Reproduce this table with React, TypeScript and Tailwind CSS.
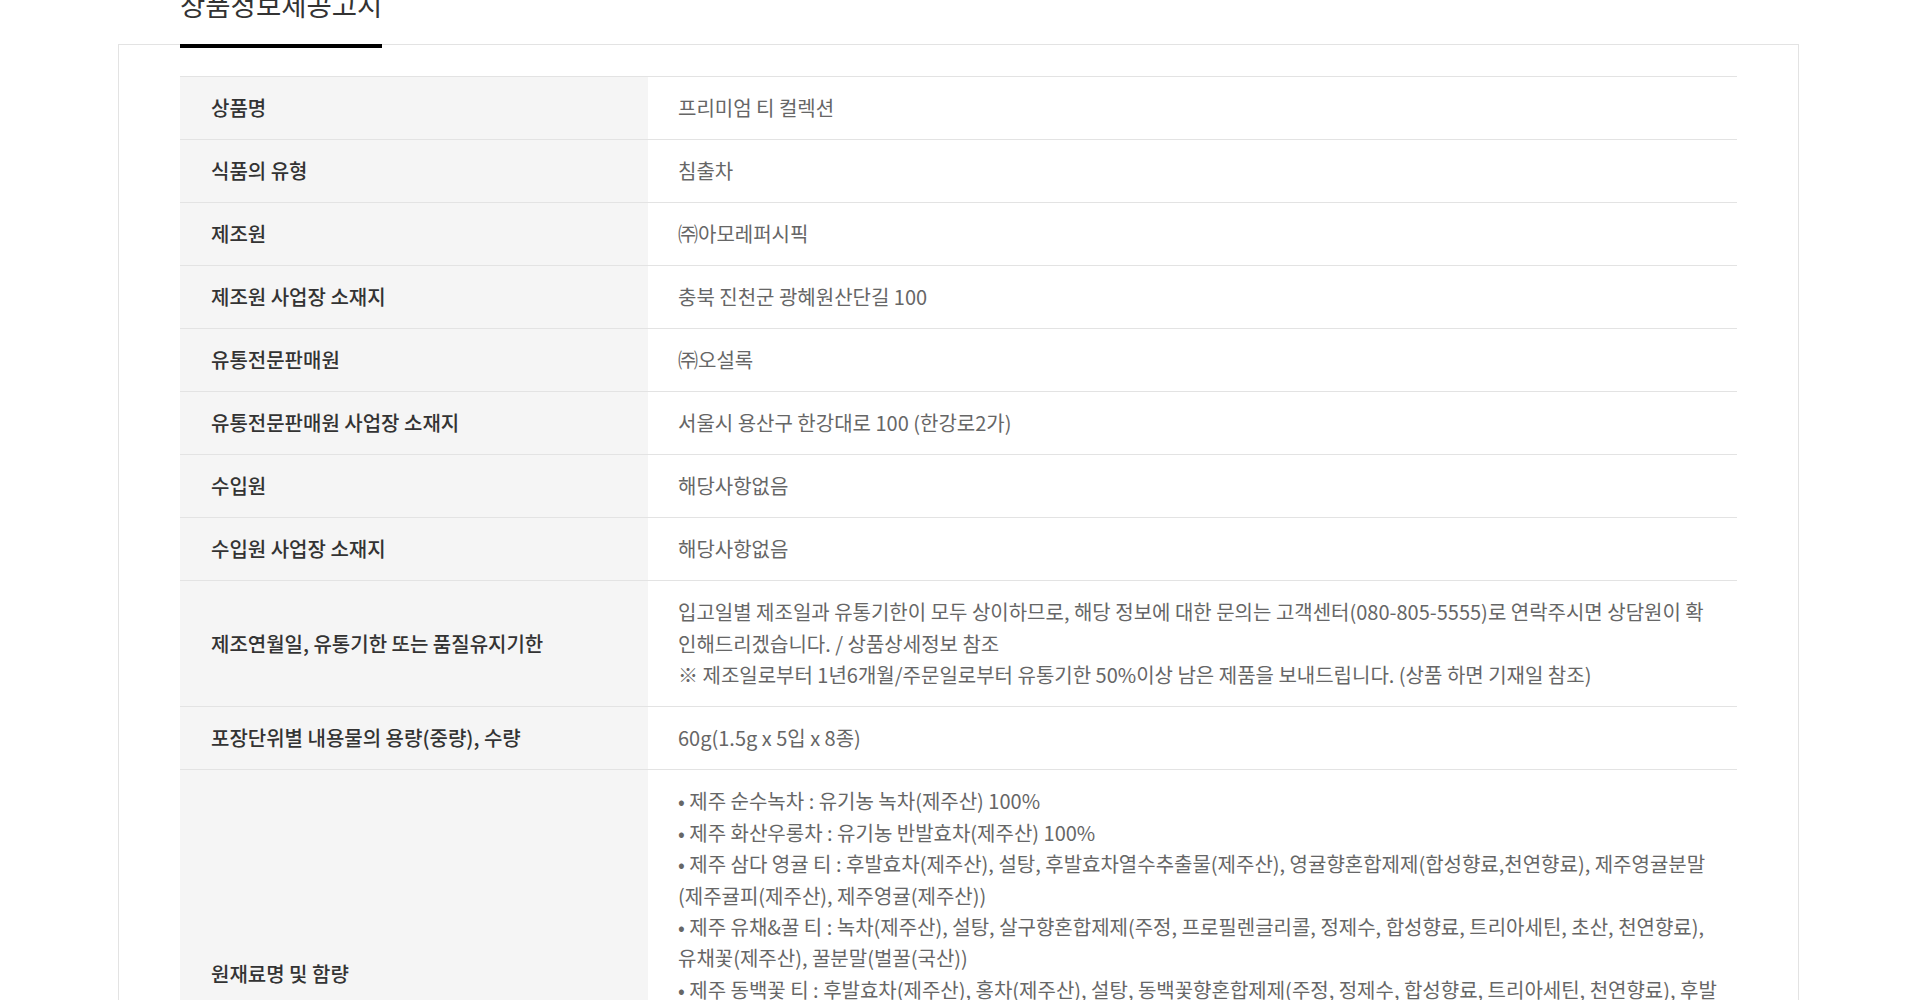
import React from 'react';

interface InfoRow {
    label: string;
    lines: string[];
}

const rows: InfoRow[] = [
    { label: '상품명', lines: ['프리미엄 티 컬렉션'] },
    { label: '식품의 유형', lines: ['침출차'] },
    { label: '제조원', lines: ['㈜아모레퍼시픽'] },
    { label: '제조원 사업장 소재지', lines: ['충북 진천군 광혜원산단길 100'] },
    { label: '유통전문판매원', lines: ['㈜오설록'] },
    { label: '유통전문판매원 사업장 소재지', lines: ['서울시 용산구 한강대로 100 (한강로2가)'] },
    { label: '수입원', lines: ['해당사항없음'] },
    { label: '수입원 사업장 소재지', lines: ['해당사항없음'] },
    {
        label: '제조연월일, 유통기한 또는 품질유지기한',
        lines: [
            '입고일별 제조일과 유통기한이 모두 상이하므로, 해당 정보에 대한 문의는 고객센터(080-805-5555)로 연락주시면 상담원이 확',
            '인해드리겠습니다. / 상품상세정보 참조',
            '※ 제조일로부터 1년6개월/주문일로부터 유통기한 50%이상 남은 제품을 보내드립니다. (상품 하면 기재일 참조)',
        ],
    },
    { label: '포장단위별 내용물의 용량(중량), 수량', lines: ['60g(1.5g x 5입 x 8종)'] },
    {
        label: '원재료명 및 함량',
        lines: [
            '• 제주 순수녹차 : 유기농 녹차(제주산) 100%',
            '• 제주 화산우롱차 : 유기농 반발효차(제주산) 100%',
            '• 제주 삼다 영귤 티 : 후발효차(제주산), 설탕, 후발효차열수추출물(제주산), 영귤향혼합제제(합성향료,천연향료), 제주영귤분말',
            '(제주귤피(제주산), 제주영귤(제주산))',
            '• 제주 유채&꿀 티 : 녹차(제주산), 설탕, 살구향혼합제제(주정, 프로필렌글리콜, 정제수, 합성향료, 트리아세틴, 초산, 천연향료),',
            '유채꽃(제주산), 꿀분말(벌꿀(국산))',
            '• 제주 동백꽃 티 : 후발효차(제주산), 홍차(제주산), 설탕, 동백꽃향혼합제제(주정, 정제수, 합성향료, 트리아세틴, 천연향료), 후발',
            '효차열수추출물(제주산), 동백꽃잎(제주산)',
            '• 제주 난꽃향 그린티 : 녹차(제주산), 난꽃향혼합제제(주정, 정제수, 합성향료, 천연향료)',
            '• 제주 감귤꽃 티 : 녹차(제주산), 감귤꽃향혼합제제(주정, 정제수, 합성향료, 천연향료), 감귤꽃(제주산)',
            '• 달빛걷기 : 녹차(제주산), 배향혼합제제(주정, 정제수, 합성향료, 천연향료), 설탕, 별사탕',
            '(설탕, 옥수수전분, 천연색소)',
        ],
    },
];

export default function App() {
    return (
        <div className="min-h-screen overflow-hidden bg-white font-['Noto_Sans_CJK_KR','Noto_Sans',sans-serif]">
            <div className="mx-auto -mt-[15px] w-[1681px]">
                {/* Tab title */}
                <div className="flex pl-[62px]">
                    <h2 className="relative z-10 -mb-1 border-b-4 border-black pb-5 text-[27.5px] font-normal leading-[39px] text-[#333]">
                        상품정보제공고시
                    </h2>
                </div>

                {/* Notice table */}
                <div className="border border-[#e3e3e3] bg-white px-[61px] pb-20 pt-[30.5px]">
                    <div className="border-t border-[#e3e3e3]">
                        {rows.map(row => (
                            <div
                                key={row.label}
                                className="grid grid-cols-[468px_1fr] border-b border-[#e3e3e3] text-[20px] leading-[31.45px]"
                            >
                                <div className="flex items-center bg-[#f5f5f5] px-[31px] font-medium text-[#333]">
                                    {row.label}
                                </div>
                                <div className="px-[30px] py-[15.3px] text-[#666]">
                                    {row.lines.map((line, i) => (
                                        <div key={i} className="whitespace-nowrap">{line}</div>
                                    ))}
                                </div>
                            </div>
                        ))}
                    </div>
                </div>
            </div>
        </div>
    );
}
